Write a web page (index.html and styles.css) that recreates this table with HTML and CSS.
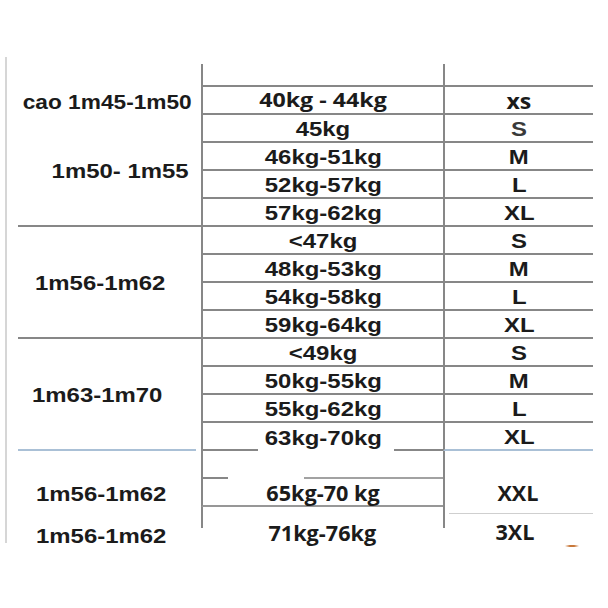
FILE: index.html
```html
<!DOCTYPE html>
<html lang="vi">
<head>
<meta charset="utf-8">
<title>Bảng size</title>
<link rel="stylesheet" href="styles.css">
</head>
<body>
<div class="sheet">
  <div class="edge"></div>
  <div class="table">
    <div class="l"></div>
    <div class="m"></div>
    <div class="r"></div>

    <div class="l p-cao"><span class="t narrow">cao 1m45-1m50</span></div>
    <div class="m"><span class="c">40kg - 44kg</span></div>
    <div class="r"><span class="c xs">xs</span></div>

    <div class="l span4 sep p-150"><span class="t">1m50- 1m55</span></div>
    <div class="m"><span class="t">45kg</span></div>
    <div class="r"><span class="t s-light">S</span></div>
    <div class="m"><span class="t">46kg-51kg</span></div>
    <div class="r"><span class="t">M</span></div>
    <div class="m"><span class="t">52kg-57kg</span></div>
    <div class="r"><span class="t">L</span></div>
    <div class="m"><span class="t">57kg-62kg</span></div>
    <div class="r"><span class="t">XL</span></div>

    <div class="l span4 sep p-std"><span class="t">1m56-1m62</span></div>
    <div class="m"><span class="t">&lt;47kg</span></div>
    <div class="r"><span class="t">S</span></div>
    <div class="m"><span class="t">48kg-53kg</span></div>
    <div class="r"><span class="t">M</span></div>
    <div class="m"><span class="t">54kg-58kg</span></div>
    <div class="r"><span class="t">L</span></div>
    <div class="m"><span class="t">59kg-64kg</span></div>
    <div class="r"><span class="t">XL</span></div>

    <div class="l span4 sep blue p-std"><span class="t">1m63-1m70</span></div>
    <div class="m"><span class="t">&lt;49kg</span></div>
    <div class="r"><span class="t">S</span></div>
    <div class="m"><span class="t">50kg-55kg</span></div>
    <div class="r"><span class="t">M</span></div>
    <div class="m"><span class="t">55kg-62kg</span></div>
    <div class="r"><span class="t">L</span></div>
    <div class="m gap-a"><span class="t">63kg-70kg</span></div>
    <div class="r blue"><span class="t">XL</span></div>

    <div class="l"></div>
    <div class="m gap-b"></div>
    <div class="r tail">
      <div class="tail-top"><span class="c big">XXL</span></div>
      <div class="tail-bottom"><span class="c big">3XL</span></div>
    </div>

    <div class="l p-bot"><span class="t">1m56-1m62</span></div>
    <div class="m soft"><span class="c big">65kg-70 kg</span></div>

    <div class="l p-bot last"><span class="t">1m56-1m62</span></div>
    <div class="m last"><span class="c big">71kg-76kg</span></div>
  </div>
</div>
<div class="dot"></div>
</body>
</html>
```
FILE: styles.css
```css
* { box-sizing: border-box; }

body {
  margin: 0;
  background: #ffffff;
  color: #1b1b1b;
}

.sheet {
  display: flex;
  align-items: flex-start;
  padding: 57px 0 0 5px;
}

.edge {
  width: 2px;
  height: 486px;
  background: #d6d6d6;
}

.table {
  margin-top: 7px;
  display: grid;
  grid-template-columns: 194px 242px 150px;
  grid-template-rows: 23px repeat(15, 28px) 40px;
}

.l, .m, .r {
  display: flex;
  align-items: center;
  justify-content: center;
  line-height: 22px;
}

.l {
  grid-column: 1;
  margin-left: 11px;
}

.m {
  grid-column: 2;
  border-left: 2px solid #878787;
  border-bottom: 2px solid #878787;
}

.r {
  grid-column: 3;
  border-left: 2px solid #878787;
  border-bottom: 2px solid #878787;
}

.span4 { grid-row: span 4; }

.sep { border-bottom: 2px solid #878787; }

.l.blue { border-bottom-color: #aac0d6; margin-right: 5px; }
.r.blue { border-bottom-color: #aac0d6; }

/* text styles */
.t {
  display: inline-block;
  font-family: "Liberation Sans", Arial, sans-serif;
  font-weight: 700;
  font-size: 21px;
  padding-top: 1px;
  transform: scaleX(1.14);
}

.t.narrow { transform: scaleX(1.08); }

.c {
  display: inline-block;
  font-family: "Open Sans", "Liberation Sans", sans-serif;
  font-weight: 700;
  font-size: 20px;
  transform: scaleX(1.16);
}

.c.xs { font-size: 22px; transform: scaleX(1.05); }

.c.big { font-size: 21px; transform: scaleX(1.03); }

.s-light { color: #3a3a3a; }

/* left column text offsets */
.p-cao { padding-right: 5px; }
.p-150 { padding-left: 21px; }
.p-std { padding-right: 19px; }
.p-bot { padding-right: 17px; }

/* partial lines at the bottom of the chart */
.m.gap-a {
  border-bottom: none;
  background: linear-gradient(to right, #878787 55px, transparent 55px, transparent 191px, #878787 191px) left bottom / 100% 2px no-repeat;
}

.m.gap-b {
  border-bottom: none;
  background: linear-gradient(to right, #878787 25px, transparent 25px, transparent 101px, #a2a2a2 101px) left bottom / 100% 2px no-repeat;
}

.m.soft { border-bottom-color: #979797; padding-top: 2px; }

.l.last, .m.last {
  align-items: flex-end;
}

.m.last {
  border-left: none;
  border-bottom: none;
  padding-bottom: 3px;
  background: linear-gradient(#878787, #878787) left top / 2px 21px no-repeat;
}

.r.tail {
  grid-row: span 3;
  border-left: none;
  border-bottom: none;
  flex-direction: column;
  align-items: stretch;
  justify-content: flex-start;
  background: linear-gradient(#878787, #878787) left top / 2px 77px no-repeat;
}

.tail-top {
  height: 63px;
  margin-left: 6px;
  padding-top: 31px;
  border-bottom: 1px solid #cfcfcf;
  display: flex;
  justify-content: center;
  padding-right: 6px;
}

.tail-bottom {
  padding-top: 7px;
  display: flex;
  justify-content: center;
  padding-right: 6px;
}

.dot {
  width: 14px;
  height: 2px;
  margin: -2px 0 0 565px;
  background: linear-gradient(to right, transparent, #c8783a 35%, #c8783a 65%, transparent);
}
```
